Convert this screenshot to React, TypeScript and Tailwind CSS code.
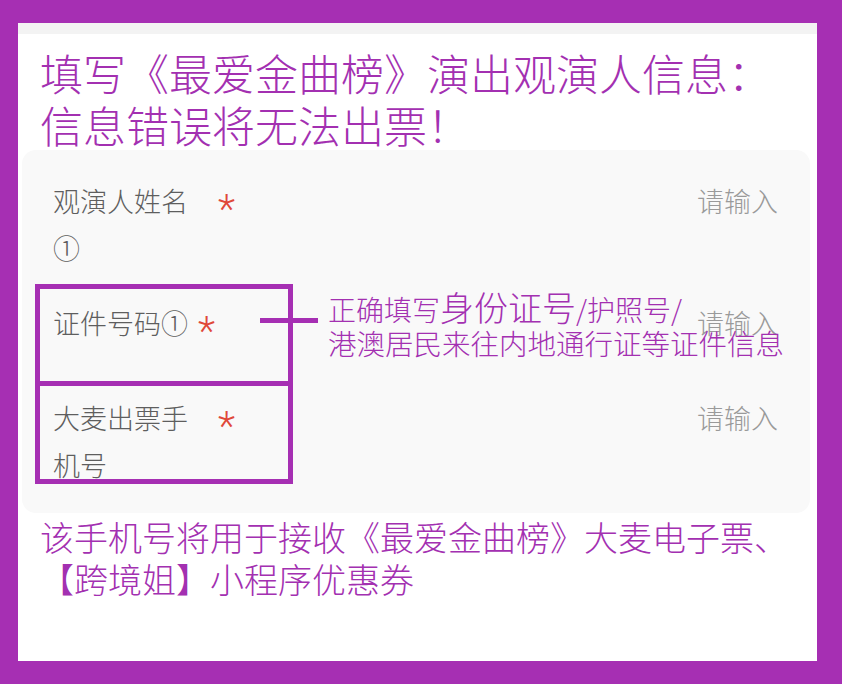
import React from "react";

const P = "text-[#a330b1]";

function Star({ ml }: { ml: string }) {
  return (
    <span className={`${ml} inline-block translate-y-[9px] text-[#e0483a] text-[40px] leading-[34px] font-['Roboto',sans-serif]`}>*</span>
  );
}

export default function App() {
  return (
    <div className="relative w-[842px] h-[684px] bg-[#a62fb3] pt-[23px] pl-[18px] pr-[25px] pb-[23px] font-['Noto_Sans_CJK_SC',sans-serif] font-light">
      <div className="w-full h-full bg-white flex flex-col">
        <div className="h-[11px] bg-[#f3f3f3]" />
        <div className={`mt-[12px] pl-[22px] text-[43px] leading-[52px] ${P}`}>
          <div>填写《最爱金曲榜》演出观演人信息：</div>
          <div>信息错误将无法出票！</div>
        </div>
        <div className="ml-[4px] mr-[7px] rounded-[14px] bg-[#f9f9f9] pt-[27px] pb-[25px] pl-[31px] pr-[32px] text-[27px] leading-[47px]">
          <div className="flex justify-between">
            <div className="text-[#5e5e5e]">
              <div className="flex items-center">
                <span>观演人姓名</span>
                <Star ml="ml-[30px]" />
              </div>
              <div>①</div>
            </div>
            <div className="text-[#9a9a9a]">请输入</div>
          </div>
          <div className="mt-[28px] flex justify-between">
            <div className="text-[#5e5e5e] flex items-center">
              <span>证件号码①</span>
              <Star ml="ml-[10px]" />
            </div>
            <div className="text-[#9a9a9a]">请输入</div>
          </div>
          <div className="mt-[48px] flex justify-between">
            <div className="text-[#5e5e5e]">
              <div className="flex items-center">
                <span>大麦出票手</span>
                <Star ml="ml-[30px]" />
              </div>
              <div>机号</div>
            </div>
            <div className="text-[#9a9a9a]">请输入</div>
          </div>
        </div>
        <div className={`mt-[3px] pl-[22px] text-[34px] leading-[42px] ${P}`}>
          <div>该手机号将用于接收《最爱金曲榜》大麦电子票、</div>
          <div>【跨境姐】小程序优惠券</div>
        </div>
      </div>

      {/* annotation overlays */}
      <div className="absolute left-[35px] top-[284px] w-[258px] h-[102px] border-[5px] border-[#a62fb3]" />
      <div className="absolute left-[35px] top-[381px] w-[258px] h-[103px] border-[5px] border-[#a62fb3]" />
      <div className="absolute left-[260px] top-[318px] w-[58px] h-[5px] bg-[#a62fb3]" />
      <div className={`absolute left-[328px] top-[289px] ${P}`}>
        <div className="flex items-baseline h-[36px] leading-[36px]">
          <span className="text-[28px]">正确填写</span>
          <span className="text-[34px]">身份证号</span>
          <span className="text-[28px]">/护照号/</span>
        </div>
        <div className="text-[28.5px] leading-[36px]">港澳居民来往内地通行证等证件信息</div>
      </div>
    </div>
  );
}
